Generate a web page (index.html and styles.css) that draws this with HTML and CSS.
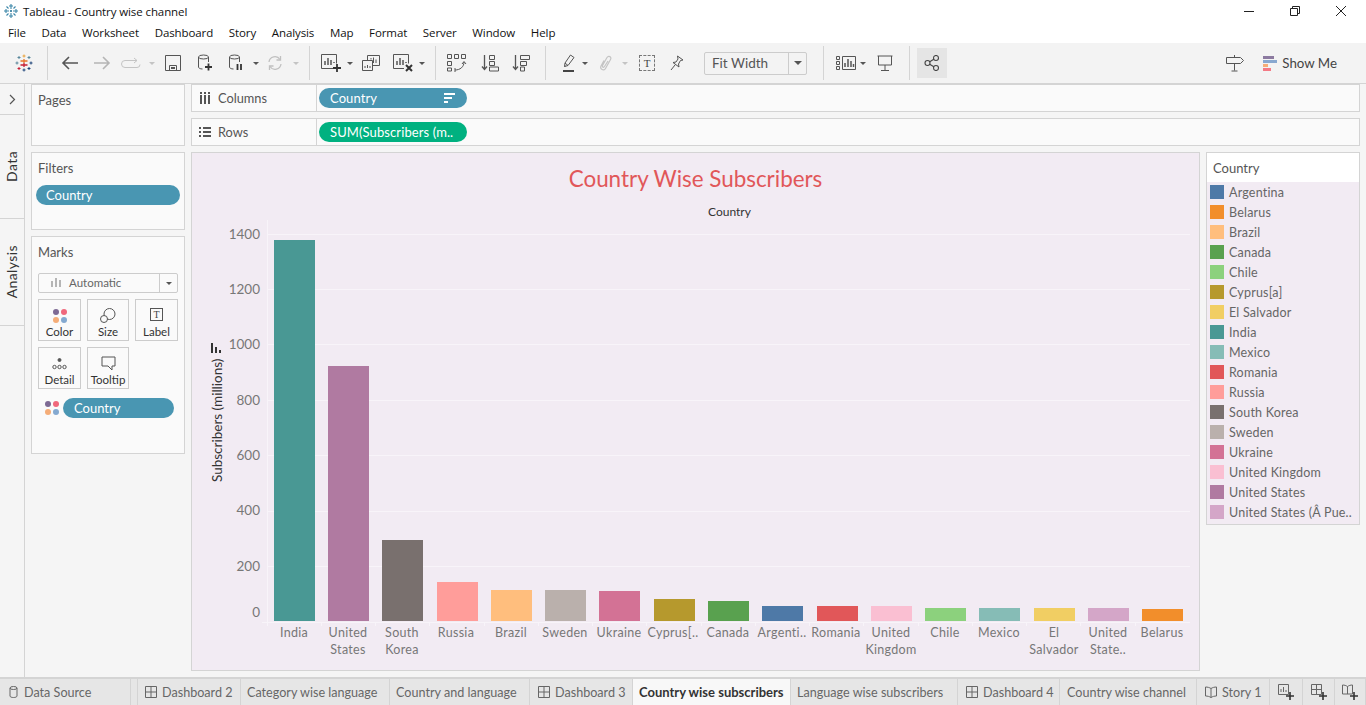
FILE: index.html
```html
<!DOCTYPE html>
<html lang="en">
<head>
  <meta charset="UTF-8" />
  <title>Tableau - Country wise channel</title>
  <link rel="stylesheet" href="styles.css">
</head>
<body>
  <!-- title bar -->
  <header class="titlebar">
    <svg class="app-icon" width="16" height="16" viewBox="0 0 16 16" fill="none" stroke="#3a86a8" stroke-width="1.100">
      <path d="M8 1v5M6 3h4M8 10v5M6 13h4M1 8h5M3 6v4M10 8h5M13 6v4M3.500 3.500l2 2M12.500 3.500l-2 2M3.500 12.500l2-2M12.500 12.500l-2-2" />
      <path d="M7 8h2M8 7v2" stroke="#1f6f94" />
    </svg>
    <span class="app-title">Tableau - Country wise channel</span>
    <div class="win-btns">
      <svg width="12" height="12" viewBox="0 0 12 12" stroke="#222" fill="none"><path d="M1 6.500h10" /></svg>
      <svg width="12" height="12" viewBox="0 0 12 12" stroke="#222" fill="#fff"><path d="M3.500 1.500h7v7h-7z" /><path d="M1.500 3.500h7v7h-7z" /></svg>
      <svg width="12" height="12" viewBox="0 0 12 12" stroke="#222" fill="none"><path d="M1 1l10 10M11 1L1 11" /></svg>
    </div>
  </header>

  <nav class="menubar">
    <span>File</span><span>Data</span><span>Worksheet</span><span>Dashboard</span><span>Story</span><span>Analysis</span><span>Map</span><span>Format</span><span>Server</span><span>Window</span><span>Help</span>
  </nav>

  <!-- toolbar -->
  <div class="toolbar">
    <div class="cell w47">
      <svg width="18" height="18" viewBox="0 0 18 18" fill="none" stroke-width="1">
        <path d="M9 5v4M5.500 7h7" stroke="#e8762b" stroke-width="1.300" />
        <path d="M9 9v4M5.500 11h7" stroke="#c72037" stroke-width="1.300" />
        <path d="M9 .5v3M7.500 2h3" stroke="#e8a23b" />
        <path d="M9 14.500v3M7.500 16h3" stroke="#1f447a" />
        <path d="M.5 9h3M2 7.500v3" stroke="#5b879b" />
        <path d="M14.500 9h3M16 7.500v3" stroke="#1f447a" />
        <path d="M4 2v3M2.500 3.500h3" stroke="#59879b" />
        <path d="M14 2v3M12.500 3.500h3" stroke="#59879b" />
        <path d="M4 13v3M2.500 14.500h3" stroke="#c72037" />
        <path d="M14 13v3M12.500 14.500h3" stroke="#1f447a" />
      </svg>
    </div>
    <i class="sep"></i>
    <div class="cell w6"></div>
    <div class="cell w32">
      <svg width="18" height="14" viewBox="0 0 18 14" fill="none" stroke="#555" stroke-width="1.600"><path d="M17 7H2M8 1L2 7l6 6" /></svg>
    </div>
    <div class="cell w32">
      <svg width="18" height="14" viewBox="0 0 18 14" fill="none" stroke="#b5b5b5" stroke-width="1.600"><path d="M1 7h15M10 1l6 6-6 6" /></svg>
    </div>
    <div class="cell w26">
      <svg width="20" height="12" viewBox="0 0 20 12" fill="none" stroke="#c4c4c4"><path d="M16 3.500H4a3 3 0 0 0 0 7h12a3 3 0 0 0 3-3" /><path d="M13 1l3 2.500L13 6" /></svg>
    </div>
    <div class="cell w16"><i class="caret off"></i></div>
    <div class="cell w26">
      <svg width="16" height="16" viewBox="0 0 16 16" fill="none" stroke="#555"><path d="M.5.500h15v15H.5z" /><path d="M4.500 15v-4.500h7V15" /><path d="M6 13h4" stroke-width="2" /></svg>
    </div>
    <div class="cell w38">
      <svg width="16" height="18" viewBox="0 0 16 18" fill="none" stroke="#555"><ellipse cx="6.500" cy="3" rx="5" ry="2" /><path d="M1.500 3v10c0 1 1.500 2 4 2M11.500 3v5" /><path d="M8 13h7M11.500 9.500v7" stroke="#333" stroke-width="1.800" /></svg>
    </div>
    <div class="cell w24">
      <svg width="16" height="18" viewBox="0 0 16 18" fill="none" stroke="#555"><ellipse cx="6.500" cy="3" rx="5" ry="2" /><path d="M1.500 3v10c0 1 1.500 2 4 2M11.500 3v5" /><path d="M9.500 10v6M13 10v6" stroke="#333" stroke-width="1.800" /></svg>
    </div>
    <div class="cell w16"><i class="caret"></i></div>
    <div class="cell w22">
      <svg width="16" height="16" viewBox="0 0 16 16" fill="none" stroke="#c0c0c0" stroke-width="1.300"><path d="M2 7a6 6 0 0 1 11-2.500M14 9a6 6 0 0 1-11 2.500" /><path d="M13.500 1v4h-4M2.500 15v-4h4" /></svg>
    </div>
    <div class="cell w20"><i class="caret off"></i></div>
    <div class="cell w3"></div>
    <i class="sep"></i>
    <div class="cell w6"></div>
    <div class="cell w30">
      <svg width="20" height="18" viewBox="0 0 20 18" fill="none" stroke="#555"><path d="M12 14.500H.5V.5h15v9" /><path d="M4 11V7M7 11V4M10 11V6M13 9V8" stroke-width="1.500" /><path d="M12 14h8M16 10v8" stroke="#333" stroke-width="1.800" /></svg>
    </div>
    <div class="cell w8"><i class="caret"></i></div>
    <div class="cell w34">
      <svg width="18" height="16" viewBox="0 0 18 16" fill="none" stroke="#555"><path d="M5.500 5V.5h12v10H11" /><path d="M.5 5.500h10v10H.5z" fill="#f3f3f3" /><path d="M9 4.500V3M11.500 8V2.500M14 8V4.500M3 13v-2M5.500 13v-3M8 13v-2" /></svg>
    </div>
    <div class="cell w30">
      <svg width="20" height="18" viewBox="0 0 20 18" fill="none" stroke="#555"><path d="M11 14.500H.5V.5h15v9" /><path d="M4 11V7M7 11V4M10 11V6M13 9V8" stroke-width="1.500" /><path d="M13 11l6 6M19 11l-6 6" stroke="#333" stroke-width="2" /></svg>
    </div>
    <div class="cell w8"><i class="caret"></i></div>
    <div class="cell w9"></div>
    <i class="sep"></i>
    <div class="cell w6"></div>
    <div class="cell w30">
      <svg width="20" height="18" viewBox="0 0 20 18" fill="none" stroke="#555"><path d="M.5.500h4v4h-4zM7.500.500h4v4h-4zM14.500.500h4v4h-4zM.5 7.500h4v4h-4zM.5 14h4v3h-4z" /><path d="M8 16c5 0 9-3 9-8M15 10l2-2.500 2 2.500M8 14v4" /></svg>
    </div>
    <div class="cell w36">
      <svg width="18" height="18" viewBox="0 0 18 18" fill="none" stroke="#555"><path d="M3.500 1v14M1 12.500l2.500 3 2.500-3" stroke-width="1.300" /><path d="M8.500 1.500h5v4h-5zM8.500 7.500h5v4h-5zM8.500 13h9v4h-9z" /></svg>
    </div>
    <div class="cell w26">
      <svg width="18" height="18" viewBox="0 0 18 18" fill="none" stroke="#555"><path d="M3.500 1v14M1 12.500l2.500 3 2.500-3" stroke-width="1.300" /><path d="M8.500 1.500h9v4h-9zM8.500 7.500h6v4h-6zM8.500 13h4v4h-4z" /></svg>
    </div>
    <div class="cell w11"></div>
    <i class="sep"></i>
    <div class="cell w8"></div>
    <div class="cell w28">
      <svg width="13" height="18" viewBox="0 0 13 18" fill="none" stroke="#555"><path d="M2.500 12.500L3 9l5.500-8L12 3.500 6 11.500zM3 9l3 2.500M2.500 12.500l1-.5" /><path d="M1 17h11" stroke="#444" stroke-width="2" /></svg>
    </div>
    <div class="cell w6"><i class="caret"></i></div>
    <div class="cell w34">
      <svg width="13" height="17" viewBox="0 0 13 17" fill="none" stroke="#c4c4c4" stroke-width="1.200"><path d="M5 5.500L2 11c-1.500 3 3 5.500 4.500 2.500l5-9C13 2 9.500 0 8 2.500L3.500 10.500c-.5 1.500 1 2.500 2 1L9 6" /></svg>
    </div>
    <div class="cell w6"><i class="caret off"></i></div>
    <div class="cell w38">
      <div class="t-box">T</div>
    </div>
    <div class="cell w22">
      <svg width="14" height="16" viewBox="0 0 14 16" fill="none" stroke="#555"><path d="M7.500 1l5.500 4-2.500.5-2 3.500.5 3L3 7.500 6 7l2-3zM5 10l-4 5" /></svg>
    </div>
    <div class="fit-combo">
      <span class="fit-label">Fit Width</span>
      <span class="fit-arrow"><i class="caret big"></i></span>
    </div>
    <i class="sep sep-fit"></i>
    <div class="cell w8"></div>
    <div class="cell w28">
      <svg width="20" height="14" viewBox="0 0 20 14" fill="none" stroke="#555"><path d="M.5.500h3v3h-3zM.5 5.500h3v3h-3zM.5 10.500h3v3h-3zM6.500.500h13v13h-13z" /><path d="M9 11V7M12 11V3M15 11V5M17.500 11V8" stroke-width="1.500" /></svg>
    </div>
    <div class="cell w6"><i class="caret"></i></div>
    <div class="cell w38">
      <svg width="16" height="16" viewBox="0 0 16 16" fill="none" stroke="#555"><path d="M.5 1h15M1.500 1v9h13V1M8 10v5M4 15.500h8" /></svg>
    </div>
    <div class="cell w5"></div>
    <i class="sep"></i>
    <div class="share">
      <svg width="16" height="16" viewBox="0 0 16 16" fill="none" stroke="#444" stroke-width="1.100"><circle cx="3.500" cy="8" r="2.500" /><circle cx="12" cy="3" r="2.500" /><circle cx="12" cy="13" r="2.500" /><path d="M5.700 6.700l4.100-2.400M5.700 9.300l4.100 2.400" /></svg>
    </div>
    <div class="tool-right">
      <svg width="18" height="18" viewBox="0 0 18 18" fill="none" stroke="#555"><path d="M.5 3.500h14l3 3-3 3H.5zM8.500 1v2.500M8.500 9.500v7M5.500 17h6" /></svg>
      <div class="showme">
        <svg width="14" height="15" viewBox="0 0 14 15"><path d="M0 0h11v3H0z" fill="#8c7aa0" /><path d="M0 4h14v3H0z" fill="#88a8d0" /><path d="M0 8h5v3H0z" fill="#f5ad78" /><path d="M0 12h8v3H0z" fill="#f47a85" /></svg>
        <span>Show Me</span>
      </div>
    </div>
  </div>

  <div class="main">
    <!-- Data / Analysis rail -->
    <aside class="rail">
      <div class="rail-top">
        <svg width="7" height="11" viewBox="0 0 7 11" fill="none" stroke="#555" stroke-width="1.200"><path d="M1 1l4.500 4.500L1 10" /></svg>
      </div>
      <div class="rail-tab rail-data"><span>Data</span></div>
      <div class="rail-tab rail-analysis"><span>Analysis</span></div>
    </aside>

    <aside class="side">
      <section class="card pages"><h3>Pages</h3></section>
      <section class="card filters">
        <h3>Filters</h3>
        <div class="pill blue">Country</div>
      </section>
      <section class="card marks">
        <h3>Marks</h3>
        <div class="mark-type">
          <span class="mark-type-name">
            <svg width="10" height="9" viewBox="0 0 10 9" fill="#b5b5b5"><path d="M0 3h2v6H0zM4 0h2v9H4zM8 2h2v7H8z" /></svg>
            Automatic
          </span>
          <span class="mark-type-arrow"><i class="caret"></i></span>
        </div>
        <div class="mark-grid">
          <div class="mark-btn">
            <div class="dots"><i class="d1"></i><i class="d2"></i><i class="d3"></i><i class="d4"></i></div>
            <span>Color</span>
          </div>
          <div class="mark-btn">
            <svg width="16" height="15" viewBox="0 0 16 15" fill="none" stroke="#555"><circle cx="9.500" cy="6" r="5.500" /><circle cx="4" cy="11" r="3.500" fill="#fafafa" /></svg>
            <span>Size</span>
          </div>
          <div class="mark-btn">
            <div class="label-t">T</div>
            <span>Label</span>
          </div>
          <div class="mark-btn">
            <svg width="15" height="15" viewBox="0 0 15 15" fill="none" stroke="#555"><circle cx="7.500" cy="4" r="1.500" fill="#555" /><circle cx="2.500" cy="11" r="1.700" /><circle cx="7.500" cy="11" r="1.700" /><circle cx="12.500" cy="11" r="1.700" /></svg>
            <span>Detail</span>
          </div>
          <div class="mark-btn">
            <svg width="15" height="15" viewBox="0 0 15 15" fill="none" stroke="#555"><path d="M1 1h13v9h-3v4l-4-4H1z" /></svg>
            <span>Tooltip</span>
          </div>
        </div>
        <div class="mark-pill-row">
          <div class="dots"><i class="d1"></i><i class="d2"></i><i class="d3"></i><i class="d4"></i></div>
          <div class="pill blue">Country</div>
        </div>
      </section>
    </aside>

    <div class="content">
      <div class="shelf">
        <div class="shelf-label">
          <svg width="12" height="12" viewBox="0 0 12 12" fill="#555"><path d="M1 3h2v9H1zM5 3h2v9H5zM9 3h2v9H9zM1 0h2v2H1zM5 0h2v2H5zM9 0h2v2H9z" /></svg>
          Columns
        </div>
        <div class="pill blue shelf-pill">
          Country
          <svg class="sort-mark" width="11" height="11" viewBox="0 0 11 11" fill="#fff"><path d="M0 0h11v2H0zM0 4h8v2H0zM0 8h4v2H0z" /></svg>
        </div>
      </div>
      <div class="shelf">
        <div class="shelf-label">
          <svg width="12" height="12" viewBox="0 0 12 12" fill="#555"><path d="M0 1h2v2H0zM4 1h8v2H4zM0 5h2v2H0zM4 5h8v2H4zM0 9h2v2H0zM4 9h8v2H4z" /></svg>
          Rows
        </div>
        <div class="pill green shelf-pill">SUM(Subscribers (m..</div>
      </div>

      <div class="view-row">
        <section class="view">
          <h1 class="view-title">Country Wise Subscribers</h1>
          <div class="view-header">Country</div>
          <svg class="plot" width="1007" height="451" viewBox="192 220 1007 451">
            <g stroke="#f8f4f9" fill="none">
              <path d="M268 234.500H1190M268 289.500H1190M268 344.500H1190M268 400.500H1190M268 455.500H1190M268 511.500H1190M268 566.500H1190" />
              <path d="M267.500 220V622M262 622.500H1190" />
              <path d="M267.500 622v4M321.500 622v4M375.500 622v4M429.500 622v4M484.500 622v4M538.500 622v4M592.500 622v4M646.500 622v4M701.500 622v4M755.500 622v4M809.500 622v4M863.500 622v4M918.500 622v4M972.500 622v4M1026.500 622v4M1080.500 622v4M1135.500 622v4" />
            </g>
            <g class="y-ticks">
              <text x="260" y="239">1400</text>
              <text x="260" y="294">1200</text>
              <text x="260" y="349">1000</text>
              <text x="260" y="405">800</text>
              <text x="260" y="460">600</text>
              <text x="260" y="515">400</text>
              <text x="260" y="571">200</text>
              <text x="260" y="617">0</text>
            </g>
            <text class="y-title" transform="translate(222 482) rotate(-90)">Subscribers (millions)</text>
            <path d="M211 343h2v10h-2zM215 347h2v6h-2zM219 350h2v3h-2z" fill="#333" />
            <g>
              <rect x="274" y="240" width="41" height="381" fill="#499894" />
              <rect x="328" y="366" width="41" height="255" fill="#b07aa1" />
              <rect x="382" y="540" width="41" height="81" fill="#79706e" />
              <rect x="437" y="582" width="41" height="39" fill="#ff9d9a" />
              <rect x="491" y="590" width="41" height="31" fill="#ffbe7d" />
              <rect x="545" y="590" width="41" height="31" fill="#bab0ac" />
              <rect x="599" y="591" width="41" height="30" fill="#d37295" />
              <rect x="654" y="599" width="41" height="22" fill="#b6992d" />
              <rect x="708" y="601" width="41" height="20" fill="#59a14f" />
              <rect x="762" y="606" width="41" height="15" fill="#4e79a7" />
              <rect x="817" y="606" width="41" height="15" fill="#e15759" />
              <rect x="871" y="606" width="41" height="15" fill="#fabfd2" />
              <rect x="925" y="608" width="41" height="13" fill="#8cd17d" />
              <rect x="979" y="608" width="41" height="13" fill="#86bcb6" />
              <rect x="1034" y="608" width="41" height="13" fill="#f1ce63" />
              <rect x="1088" y="608" width="41" height="13" fill="#d4a6c8" />
              <rect x="1142" y="609" width="41" height="12" fill="#f28e2b" />
            </g>
            <g class="x-ticks">
              <text x="294" y="637">India</text>
              <text x="348" y="637">United</text><text x="348" y="654">States</text>
              <text x="402" y="637">South</text><text x="402" y="654">Korea</text>
              <text x="456" y="637">Russia</text>
              <text x="511" y="637">Brazil</text>
              <text x="565" y="637">Sweden</text>
              <text x="619" y="637">Ukraine</text>
              <text x="673" y="637">Cyprus[..</text>
              <text x="728" y="637">Canada</text>
              <text x="782" y="637">Argenti..</text>
              <text x="836" y="637">Romania</text>
              <text x="891" y="637">United</text><text x="891" y="654">Kingdom</text>
              <text x="945" y="637">Chile</text>
              <text x="999" y="637">Mexico</text>
              <text x="1054" y="637">El</text><text x="1054" y="654">Salvador</text>
              <text x="1108" y="637">United</text><text x="1108" y="654">State..</text>
              <text x="1162" y="637">Belarus</text>
            </g>
          </svg>
        </section>

        <section class="legend">
          <h3>Country</h3>
          <ul class="legend-list">
            <li><i class="sw c-argentina"></i>Argentina</li>
            <li><i class="sw c-belarus"></i>Belarus</li>
            <li><i class="sw c-brazil"></i>Brazil</li>
            <li><i class="sw c-canada"></i>Canada</li>
            <li><i class="sw c-chile"></i>Chile</li>
            <li><i class="sw c-cyprus"></i>Cyprus[a]</li>
            <li><i class="sw c-salvador"></i>El Salvador</li>
            <li><i class="sw c-india"></i>India</li>
            <li><i class="sw c-mexico"></i>Mexico</li>
            <li><i class="sw c-romania"></i>Romania</li>
            <li><i class="sw c-russia"></i>Russia</li>
            <li><i class="sw c-korea"></i>South Korea</li>
            <li><i class="sw c-sweden"></i>Sweden</li>
            <li><i class="sw c-ukraine"></i>Ukraine</li>
            <li><i class="sw c-uk"></i>United Kingdom</li>
            <li><i class="sw c-us"></i>United States</li>
            <li><i class="sw c-usa"></i>United States (Â Pue..</li>
          </ul>
        </section>
      </div>
    </div>
  </div>

  <!-- sheet tabs -->
  <footer class="tabs">
    <div class="tab ds">
      <svg width="9" height="12" viewBox="0 0 9 12" fill="none" stroke="#666"><ellipse cx="4.500" cy="2" rx="3.500" ry="1.500" /><path d="M1 2v8c0 2 7 2 7 0V2" /></svg>
      Data Source
    </div>
    <div class="tab gap"></div>
    <div class="tab icon-tab">
      <svg width="12" height="12" viewBox="0 0 12 12" fill="none" stroke="#666"><path d="M.5.500h11v11H.5zM6 .5v11M.5 6h11" /></svg>
      Dashboard 2
    </div>
    <div class="tab">Category wise language</div>
    <div class="tab">Country and language</div>
    <div class="tab icon-tab">
      <svg width="12" height="12" viewBox="0 0 12 12" fill="none" stroke="#666"><path d="M.5.500h11v11H.5zM6 .5v11M.5 6h11" /></svg>
      Dashboard 3
    </div>
    <div class="tab active">Country wise subscribers</div>
    <div class="tab">Language wise subscribers</div>
    <div class="tab icon-tab">
      <svg width="12" height="12" viewBox="0 0 12 12" fill="none" stroke="#666"><path d="M.5.500h11v11H.5zM6 .5v11M.5 6h11" /></svg>
      Dashboard 4
    </div>
    <div class="tab wide-pad">Country wise channel</div>
    <div class="tab icon-tab">
      <svg width="12" height="12" viewBox="0 0 12 12" fill="none" stroke="#666"><path d="M.5 1c2 0 4 .5 5.500 1.500C7.500 1.500 9.500 1 11.500 1v9c-2 0-4 .5-5.500 1.500C4.500 10.500 2.500 10 .5 10zM6 2.500v9" /></svg>
      Story 1
    </div>
    <div class="tab add">
      <svg width="16" height="16" viewBox="0 0 16 16" fill="none" stroke="#666"><path d="M.5.500h10v10H.5z" /><path d="M3 8V5M5.500 8V3M8 8V6" /><path d="M8 12h8M12 8v8" stroke="#333" stroke-width="1.600" /></svg>
    </div>
    <div class="tab add">
      <svg width="16" height="16" viewBox="0 0 16 16" fill="none" stroke="#666"><path d="M.5.500h10v10H.5zM5.500.5v10M.5 5.500h10" /><path d="M8 12h8M12 8v8" stroke="#333" stroke-width="1.600" /></svg>
    </div>
    <div class="tab add">
      <svg width="16" height="16" viewBox="0 0 16 16" fill="none" stroke="#666"><path d="M.5 1c2 0 3.500.5 5 1.500C7 1.500 8.500 1 10.500 1v9H.5zM5.500 2.500V10" /><path d="M8 12h8M12 8v8" stroke="#333" stroke-width="1.600" /></svg>
    </div>
  </footer>
</body>
</html>
```

FILE: styles.css
```css
* {
  margin: 0;
  padding: 0;
  box-sizing: border-box;
}

html, body {
  height: 100%;
  overflow: hidden;
}

body {
  display: flex;
  flex-direction: column;
  font-family: 'Lato', 'Open Sans', sans-serif;
  font-size: 13px;
  color: #555;
  background-color: #f5f5f5;
}

h1, h3 {
  font-weight: normal;
}

/* title bar and menu */
.titlebar {
  display: flex;
  align-items: center;
  height: 22px;
  padding-left: 3px;
  background: #fff;
  color: #111;
  font-family: 'Open Sans', sans-serif;
  font-size: 11.500px;
  letter-spacing: -.1px;
}

.app-icon {
  margin-right: 4px;
}

.win-btns {
  display: flex;
  gap: 34px;
  margin-left: auto;
  padding-right: 19px;
}

.menubar {
  display: flex;
  align-items: center;
  gap: 15.700px;
  height: 21px;
  padding-left: 8px;
  background: #fff;
  color: #111;
  font-family: 'Open Sans', sans-serif;
  font-size: 11.500px;
  letter-spacing: -.1px;
}

/* toolbar */
.toolbar {
  display: flex;
  align-items: center;
  height: 41px;
  background: #f3f3f3;
  border-bottom: 1px solid #d4d4d4;
}

.cell {
  display: flex;
  flex: none;
  align-items: center;
  justify-content: center;
  height: 30px;
}

.w3 { width: 3px; }
.w5 { width: 5px; }
.w6 { width: 6px; }
.w8 { width: 8px; }
.w9 { width: 9px; }
.w11 { width: 11px; }
.w16 { width: 16px; }
.w20 { width: 20px; }
.w22 { width: 22px; }
.w24 { width: 24px; }
.w26 { width: 26px; }
.w28 { width: 28px; }
.w30 { width: 30px; }
.w32 { width: 32px; }
.w34 { width: 34px; }
.w36 { width: 36px; }
.w38 { width: 38px; }
.w47 { width: 47px; }

.cell svg {
  flex: none;
}

.sep {
  flex: none;
  width: 1px;
  height: 34px;
  background: #d4d4d4;
}

.sep-fit {
  margin-left: 16px;
}

.caret {
  display: block;
  width: 0;
  height: 0;
  border-left: 3px solid transparent;
  border-right: 3px solid transparent;
  border-top: 3px solid #555;
}

.caret.off {
  border-top-color: #c4c4c4;
}

.caret.big {
  border-left-width: 4px;
  border-right-width: 4px;
  border-top-width: 4px;
}

.t-box {
  width: 16px;
  height: 16px;
  border: 1px dashed #777;
  font-family: 'Liberation Serif', serif;
  font-size: 11px;
  line-height: 14px;
  text-align: center;
  color: #444;
}

.fit-combo {
  display: flex;
  flex: none;
  width: 103px;
  height: 23px;
  margin-left: 16px;
  border: 1px solid #ccc;
  border-radius: 2px;
}

.fit-label {
  flex: 1;
  padding-left: 7px;
  line-height: 21px;
  font-size: 13.500px;
}

.fit-arrow {
  display: flex;
  align-items: center;
  justify-content: center;
  width: 18px;
  border-left: 1px solid #ccc;
}

.share {
  display: flex;
  flex: none;
  align-items: center;
  justify-content: center;
  width: 30px;
  height: 30px;
  margin-left: 7px;
  background: #e5e5e5;
}

.tool-right {
  display: flex;
  align-items: center;
  gap: 19px;
  margin-left: auto;
  padding-right: 29px;
}

.showme {
  display: flex;
  align-items: center;
  gap: 5px;
  color: #444;
  font-size: 13.300px;
}

/* main area */
.main {
  display: flex;
  flex: 1;
  min-height: 0;
}

.rail {
  flex: none;
  width: 25px;
  border-right: 1px solid #d4d4d4;
}

.rail-top {
  display: flex;
  align-items: center;
  justify-content: center;
  height: 31px;
  border-bottom: 1px solid #d4d4d4;
}

.rail-tab {
  display: flex;
  align-items: center;
  justify-content: center;
  padding-right: 2px;
  border-bottom: 1px solid #d4d4d4;
  color: #333;
  font-size: 14px;
  letter-spacing: .4px;
}

.rail-tab span {
  writing-mode: vertical-rl;
  transform: rotate(180deg);
}

.rail-data {
  height: 104px;
}

.rail-analysis {
  height: 107px;
}

.side {
  display: flex;
  flex: none;
  flex-direction: column;
  gap: 6px;
  width: 154px;
  margin-left: 6px;
}

.card {
  padding: 7px 6px;
  background: #fafafa;
  border: 1px solid #d4d4d4;
}

.card h3 {
  padding-left: 0;
  font-size: 13px;
  line-height: 16px;
}

.pages {
  height: 62px;
}

.filters {
  height: 78px;
  padding: 7px 4px 0;
}

.filters h3 {
  padding-left: 2px;
}

.filters .pill {
  margin-top: 9px;
}

.marks {
  height: 218px;
}

.pill {
  display: flex;
  align-items: center;
  height: 20px;
  padding-left: 10px;
  border-radius: 10px;
  color: #fff;
  font-size: 13px;
}

.blue {
  background: #4996b2;
}

.green {
  background: #00b180;
}

.mark-type {
  display: flex;
  height: 20px;
  margin-top: 13px;
  border: 1px solid #ccc;
  border-radius: 2px;
  font-size: 11.500px;
}

.mark-type-name {
  display: flex;
  flex: 1;
  align-items: center;
  gap: 8px;
  padding: 0 0 1px 12px;
  color: #666;
}

.mark-type-arrow {
  display: flex;
  align-items: center;
  justify-content: center;
  width: 18px;
  border-left: 1px solid #ccc;
}

.mark-grid {
  display: grid;
  grid-template-columns: 43px 42px 43px;
  grid-auto-rows: 42px;
  gap: 6px;
  margin-top: 6px;
}

.mark-btn {
  display: flex;
  flex-direction: column;
  align-items: center;
  justify-content: flex-end;
  gap: 2px;
  padding-bottom: 2px;
  border: 1px solid #ccc;
  color: #333;
  font-size: 11.500px;
}

.dots {
  display: grid;
  flex: none;
  grid-template-columns: 6px 6px;
  gap: 2px;
}

.dots i {
  width: 6px;
  height: 6px;
  border-radius: 50%;
}

.d1 { background: #7d6a94; }
.d2 { background: #f0687c; }
.d3 { background: #f5ad78; }
.d4 { background: #84a9d0; }

.label-t {
  width: 13px;
  height: 13px;
  margin-bottom: 2px;
  border: 1px solid #555;
  font-family: 'Liberation Serif', serif;
  font-size: 10px;
  line-height: 11px;
  text-align: center;
  color: #444;
}

.mark-pill-row {
  display: flex;
  align-items: center;
  gap: 4px;
  margin-top: 9px;
  padding-left: 7px;
}

.mark-pill-row .pill {
  width: 111px;
  padding-left: 11px;
}

.content {
  display: flex;
  flex: 1;
  flex-direction: column;
  gap: 6px;
  min-width: 0;
  margin: 0 6px 0 6px;
}

.shelf {
  display: flex;
  flex: none;
  align-items: center;
  height: 28px;
  background: #fafafa;
  border: 1px solid #d4d4d4;
}

.shelf-label {
  display: flex;
  flex: none;
  align-items: center;
  gap: 7px;
  width: 125px;
  height: 100%;
  padding-left: 7px;
  border-right: 1px solid #d4d4d4;
  font-size: 12.800px;
}

.shelf-pill {
  position: relative;
  width: 148px;
  margin-left: 2px;
  padding-left: 11px;
  letter-spacing: .1px;
}

.sort-mark {
  position: absolute;
  right: 12px;
  top: 5px;
}

/* worksheet */
.view-row {
  display: flex;
  flex: 1;
  gap: 6px;
  min-height: 0;
  align-items: flex-start;
}

.view {
  flex: none;
  width: 1009px;
  height: 519px;
  background: #f2ebf3;
  border: 1px solid #d4d4d4;
}

.view-title {
  height: 40px;
  padding-top: 12px;
  color: #e15759;
  font-size: 22.400px;
  line-height: 28px;
  text-align: center;
}

.view-header {
  height: 27px;
  padding: 11px 0 0 68px;
  color: #333;
  font-size: 12px;
  line-height: 15px;
  text-align: center;
}

.plot {
  display: block;
  font-family: 'Lato', sans-serif;
  font-size: 12.500px;
}

.y-ticks text {
  text-anchor: end;
  fill: #777;
  font-size: 13.500px;
}

.x-ticks text {
  text-anchor: middle;
  fill: #777;
  letter-spacing: .3px;
}

.y-title {
  fill: #333;
  font-size: 13.500px;
}

/* colour legend */
.legend {
  flex: none;
  width: 154px;
  height: 373px;
  background: #fff;
  border: 1px solid #d4d4d4;
}

.legend h3 {
  height: 29px;
  padding-left: 6px;
  font-size: 13px;
  line-height: 30px;
}

.legend-list {
  height: 342px;
  background: #f2ebf3;
  list-style: none;
}

.legend-list li {
  display: flex;
  align-items: center;
  gap: 5px;
  height: 20px;
  padding-left: 3px;
  color: #666;
  font-size: 12.500px;
  letter-spacing: .2px;
  white-space: nowrap;
}

.sw {
  flex: none;
  width: 14px;
  height: 14px;
}

.c-argentina { background: #4e79a7; }
.c-belarus { background: #f28e2b; }
.c-brazil { background: #ffbe7d; }
.c-canada { background: #59a14f; }
.c-chile { background: #8cd17d; }
.c-cyprus { background: #b6992d; }
.c-salvador { background: #f1ce63; }
.c-india { background: #499894; }
.c-mexico { background: #86bcb6; }
.c-romania { background: #e15759; }
.c-russia { background: #ff9d9a; }
.c-korea { background: #79706e; }
.c-sweden { background: #bab0ac; }
.c-ukraine { background: #d37295; }
.c-uk { background: #fabfd2; }
.c-us { background: #b07aa1; }
.c-usa { background: #d4a6c8; }

/* sheet tabs */
.tabs {
  display: grid;
  flex: none;
  grid-template-columns: 131px 6px 104px 149px 140px 103px 158px 167px 102px 137px 73px 33px 32px 31px;
  height: 28px;
  background: #e6e6e6;
  border-top: 2px solid #d4d4d4;
}

.tab {
  display: flex;
  align-items: center;
  gap: 5px;
  padding-left: 6px;
  border-right: 1px solid #d4d4d4;
  color: #666;
  font-size: 12.600px;
  white-space: nowrap;
}

.tab svg {
  flex: none;
}

.tab.ds {
  padding-left: 9px;
  gap: 6px;
}

.tab.icon-tab {
  padding-left: 8px;
}

.tab.wide-pad {
  padding-left: 7px;
}

.tab.active {
  background: #f8f8f8;
  color: #333;
  font-size: 13px;
  font-weight: bold;
}

.tab.add {
  justify-content: center;
  padding-left: 0;
}
```
